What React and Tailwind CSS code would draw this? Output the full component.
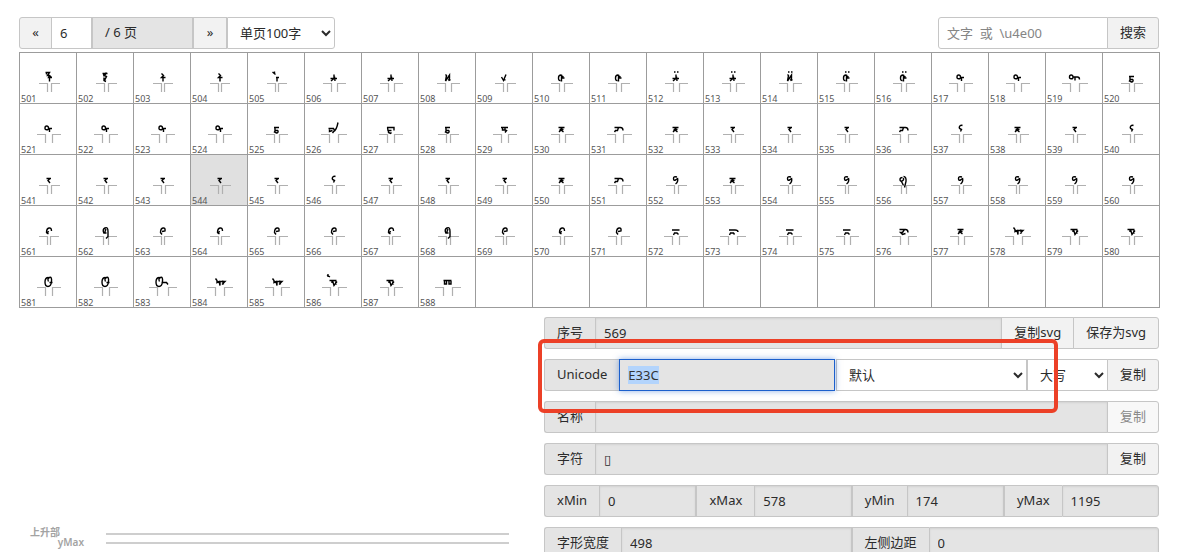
import { useEffect, useRef } from "react";

const SHAPES = {
  a: "M26 20h4l-2 3h2l2 2M27 20v2M30 23l-1 2h3.500M30 24v5",
  b: "M26 21h5M30 20l-2 3 2 1-2 4M27 21l.5 3M27.500 25v3l2 1",
  c: "M28 21l2 2-2 2h4M29.500 24v5",
  d: "M25 19.500l3 2.500M27 19v2M28.500 25h3M29.500 25v4",
  e: "M26 26h6.500M29.500 22v4l-3 2.500M30 24l.5 4.500",
  f: "M27 22l1 1-1 5.500 4-6v3l-1 2.500M30 28l2-1",
  g: "M26 24.500l2 3.500 2.500-6M28 27l2 .5",
  h: "M28.500 22.500q-2.500 0-2.500 3t2 2.500M29 22v7M29 25.500h3M29 23.500l2 1",
  i: "M25.500 24.500q0-2 1.700-2t1.800 2-1.800 1.800-1.700-1.800M29 25h3.500M30 24.500v4",
  j: "M24 24.500q0-2 1.700-2t1.800 2-1.800 1.800-1.700-1.800M28 24.500h4q2 0 2 2.500M29.500 25v3",
  k: "M26.500 24h5M27.500 24v3h3M28 27l-1 1.500 2 1q2 0 1.500-2.500",
  l: "M24 25h5l1 2-2 2.500M25 26v2l3-1M29 28q3-1 4.500-9",
  m: "M25.500 24h7v3M26 24l.5 3h3.500M27 27v2l2 1 1-1",
  n: "M25.500 24h7M27 24v2.500h2M29.500 24.500v2l1.500.5-1.500 2",
  o: "M26 24h6M30 24l-2 2h3M26.500 28.500l2-2 2.500 2",
  p: "M25 24h6q2.500 0 2.500 3M29 24l-1 3h-2l-1 1.500",
  q: "M27 24h4.500M30.500 24l-2 2 2 2.500",
  r: "M31 22q-2-1-3 1t2 3l-1 2",
  s: "M29 28.500l-2-1.500q0-4 2.500-4.500t2.500 3M29 25.500l-1.500 3",
  t: "M27.500 28q-2-4 1-5.500t3 3.500l0 5-2 2M29.500 23.500l-1.500 4h2",
  u: "M28.500 29l-1.500-2q0-4 2.500-4.500t2 3l-3 .5",
  v: "M25.500 24.500h7.500M27 29.500l1-2h2.500l1.500 1.500",
  w: "M25.500 24.500h6q3 0 3 2M26 29.500l1-2h3l1 1.500",
  x: "M25 24h6q2.500 0 2.500 3M30 24l-2 3h-2l2 2 3-1",
  y: "M25 22l1.500 2v2l2-1 1 4v-4h5l-3 3M32 24l1 4",
  z: "M25 24h7M28 24l1.500 5 3-4M27.500 24v2.500M31 25l1 3",
  A: "M29 21q-3.500 0-3.500 4.500t3 4.500 3.500-5-2-4-1 4M30 26h3",
  B: "M26 21q-3.500 0-3.500 4.500t3 4.500 3.500-5-2-4-1 4M28 26h5l1.500 2",
  C: "M25 24h8M26 24v3.500h2v-3M30.500 24v3.500h2v-3",
  D: "M30.500 22.500q-3.500-1-3.500 1.500t2 1.500 2-2q1 4-2 6",
  E: "M28 23q-2.500 0-2.500 2t2 1.500 1.500-3M29 22q3 0 2.500 5l-1.500 6M27 27l2 4",
};

const GLYPHS =
  "a4 b4 c3 c3 d3 e6 e6 f6 g4 h5 h5 e6* e6* f6* h5* h5* i7 i7 j9 k5 " +
  "i7 i7 i7 i7 k5 l9 m7 k4 n7 o6 p8 o6 q4 q4 q4 p8 r4 o4 q4 r4 " +
  "q4 q4 q4 q4 q4 r4 q4 q4 q4 o5 p6 D4 o4 D4 D3 E5 D4 D3 D4 D4 " +
  "s3 t5 u3 s3 u4 u4 s3 t4 u3 s4 u5 v7 w9 v6 v6 x8 o6 y9 z9 z5 " +
  "A7 A7 B11 y9 y8 z8' z6 C9";

const cells = GLYPHS.split(" ").map((code, i) => ({
  number: 501 + i,
  shape: code[0],
  width: parseInt(code.slice(1), 10),
  dots: code.endsWith("*"),
  tick: code.endsWith("'"),
}));

const rows = [0, 1, 2, 3, 4].map((r) =>
  Array.from({ length: 20 }, (_, c) => cells[r * 20 + c] || null)
);

function Glyph({ cell }) {
  const left = 29 - Math.ceil(cell.width / 2);
  const right = left + cell.width;
  return (
    <svg className="block h-[50px] w-[56px]" viewBox="0 0 56 50" fill="none" aria-hidden="true">
      <path
        d={`M${left - 8} 30.500H${left}M${right + 9} 30.500H${right + 1}M${left + 0.5} 30V39M${right + 0.5} 30V39`}
        stroke="#b0b0b0"
        strokeWidth="1.200"
      />
      <path d={SHAPES[cell.shape]} transform="translate(-0.500 -0.500)" stroke="#000" strokeWidth="1.400" />
      {cell.dots && <path d="M27 19h1.500M30 19h1.500" stroke="#000" strokeWidth="1.500" />}
      {cell.tick && <path d="M22 18l3 2M23 17v3" stroke="#000" strokeWidth="1.300" />}
    </svg>
  );
}

const base = "h-8 border border-[#c6c6c6]";
const shade = "bg-[#e4e4e4]";

function Tag({ htmlFor, className = "", children }) {
  return (
    <label
      htmlFor={htmlFor}
      className={`${base} ${shade} flex shrink-0 items-center border-r-0 px-3 first:rounded-l-[3px] ${className}`}
    >
      {children}
    </label>
  );
}

function Field({ id, value, className = "" }) {
  return (
    <input
      id={id}
      readOnly
      defaultValue={value}
      className={`${base} ${shade} w-0 min-w-0 flex-1 px-2 shadow-[inset_0_1px_2px_rgba(0,0,0,0.08)] outline-none last:rounded-r-[3px] ${className}`}
    />
  );
}

function Btn({ className = "", ...props }) {
  return (
    <button
      type="button"
      className={`${base} -ml-px shrink-0 bg-[#f2f2f2] px-3 last:rounded-r-[3px] disabled:bg-[#f8f8f8] disabled:text-[#8a8a8a] ${className}`}
      {...props}
    />
  );
}

export default function App() {
  const code = useRef(null);
  useEffect(() => {
    code.current.focus();
    code.current.select();
  }, []);

  return (
    <div className="h-screen overflow-hidden bg-white pt-[17px] pr-[27px] pl-[19px] font-['Noto_Sans','Noto_Sans_CJK_SC',sans-serif] text-[13px] text-[#2b2b2b]">
      <div className="flex justify-between pr-px">
        <div className="flex">
          <button type="button" aria-label="上一页" className={`${base} w-[33px] rounded-l-[3px] bg-[#f2f2f2]`}>
            «
          </button>
          <input aria-label="页码" defaultValue="6" className={`${base} -ml-px w-[41px] bg-white px-2`} />
          <span className={`${base} ${shade} flex w-[101px] items-center px-3`}>/ 6 页</span>
          <button type="button" aria-label="下一页" className={`${base} w-[34px] bg-[#f2f2f2]`}>
            »
          </button>
          <select aria-label="单页字数" className={`${base} w-[108px] rounded-r-[3px] bg-white pl-2`}>
            <option>单页100字</option>
          </select>
        </div>
        <div className="flex">
          <input
            aria-label="搜索文字"
            placeholder="文字  或  \u4e00"
            className={`${base} w-[170px] rounded-l-[3px] bg-white px-2 placeholder:text-[#858585]`}
          />
          <Btn>搜索</Btn>
        </div>
      </div>

      <table className="mt-[3px] w-full table-fixed border-collapse">
        <tbody>
          {rows.map((row, r) => (
            <tr key={r}>
              {row.map((cell, c) => (
                <td
                  key={c}
                  className={`h-[51px] border border-[#9c9c9c] p-0 align-top ${cell && cell.number === 544 ? "bg-[#e0e0e0]" : ""}`}
                >
                  {cell && (
                    <div className="relative h-[50px]">
                      <Glyph cell={cell} />
                      <span className="absolute bottom-0 left-px text-[9px] leading-2 text-[#555]">
                        {cell.number}
                      </span>
                    </div>
                  )}
                </td>
              ))}
            </tr>
          ))}
        </tbody>
      </table>

      <div className="mt-[9px] grid grid-cols-[525fr_615fr] pr-px">
        <svg className="h-[250px] w-full" fill="none" aria-label="字形预览">
          <path d="M87 217H490M87 226H490" stroke="#cecece" strokeWidth="2" />
          <g fill="#a3a3a3" fontSize="10" fontWeight="600">
            <text x="41" y="219" textAnchor="end">上升部</text>
            <text x="65" y="229" textAnchor="end">yMax</text>
          </g>
        </svg>

        <div className="relative flex flex-col gap-[10px]">
          <div className="flex">
            <Tag htmlFor="index">序号</Tag>
            <Field id="index" value="569" />
            <Btn>复制svg</Btn>
            <Btn>保存为svg</Btn>
          </div>
          <div className="flex">
            <Tag htmlFor="unicode">Unicode</Tag>
            <input
              id="unicode"
              ref={code}
              readOnly
              defaultValue="E33C"
              className={`${base} ${shade} relative w-0 min-w-0 flex-1 px-2 outline-none selection:bg-[#b3d4fc] selection:text-[#333] focus:border-[#1b5fcc] focus:shadow-[0_0_6px_rgba(27,95,204,0.5)]`}
            />
            <select aria-label="编码格式" className={`${base} ml-px w-[191px] bg-white pl-2`}>
              <option>默认</option>
            </select>
            <select aria-label="大小写" className={`${base} w-[81px] bg-white pl-2`}>
              <option>大写</option>
            </select>
            <Btn>复制</Btn>
          </div>
          <div className="flex">
            <Tag htmlFor="name">名称</Tag>
            <Field id="name" value="" />
            <Btn disabled>复制</Btn>
          </div>
          <div className="flex">
            <Tag htmlFor="char">字符</Tag>
            <Field id="char" value="▯" className="font-['DejaVu_Sans',sans-serif]" />
            <Btn>复制</Btn>
          </div>
          <div className="flex">
            <Tag htmlFor="xmin">xMin</Tag>
            <Field id="xmin" value="0" />
            <Tag htmlFor="xmax">xMax</Tag>
            <Field id="xmax" value="578" />
            <Tag htmlFor="ymin">yMin</Tag>
            <Field id="ymin" value="174" />
            <Tag htmlFor="ymax">yMax</Tag>
            <Field id="ymax" value="1195" />
          </div>
          <div className="flex">
            <Tag htmlFor="advance">字形宽度</Tag>
            <Field id="advance" value="498" />
            <Tag htmlFor="bearing">左侧边距</Tag>
            <Field id="bearing" value="0" />
          </div>
          <div className="pointer-events-none absolute top-[22px] -left-[6px] h-[74px] w-[520px] rounded-md border-4 border-[#ec4027]" />
        </div>
      </div>
    </div>
  );
}
